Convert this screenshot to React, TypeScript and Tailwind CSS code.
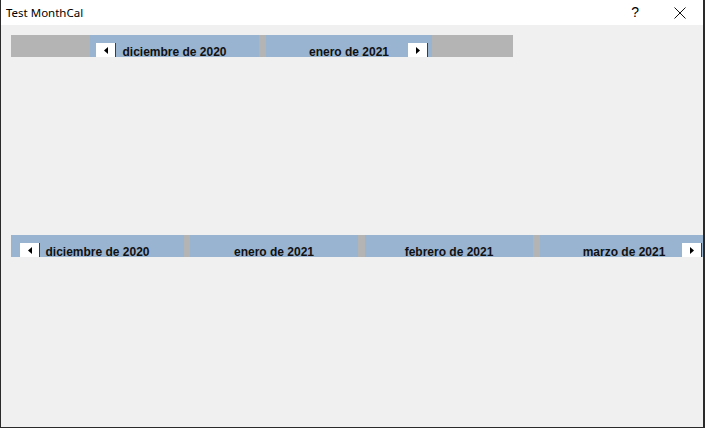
import React from 'react';

const font = { fontFamily: '"Liberation Sans", Arial, sans-serif' };

const NavButton: React.FC<{ dir: 'prev' | 'next'; className: string }> = ({ dir, className }) => (
  <div className={`absolute top-[8px] w-[20px] h-[16px] bg-white border-r border-[#3c3c3c] flex items-start justify-center pt-[4px] ${className}`}>
    <svg width="4" height="7" viewBox="0 0 4 7">
      {dir === 'prev' ? <path d="M4 0 L0 3.5 L4 7 Z" fill="#000" /> : <path d="M0 0 L4 3.5 L0 7 Z" fill="#000" />}
    </svg>
  </div>
);

const MonthHeader: React.FC<{ title: string; width: string; children?: React.ReactNode }> = ({ title, width, children }) => (
  <div className={`relative shrink-0 h-full bg-[#99b4d1] ${width}`}>
    <div className="pt-[10px] text-center text-[12px] leading-[14px] font-bold text-[#111]" style={font}>
      {title}
    </div>
    {children}
  </div>
);

const Sep: React.FC<{ w?: string }> = ({ w = 'w-[7px]' }) => <div className={`shrink-0 h-full bg-[#b4b4b4] ${w}`} />;

export default function App() {
  return (
    <div className="w-[705px] h-[428px] flex flex-col border-l border-r-2 border-b border-[#2a2a2a] bg-white overflow-hidden" style={font}>
      <div className="h-[25px] shrink-0 flex items-center bg-white">
        <span className="pl-[5px] text-[11.5px] text-black" style={{ fontFamily: '"Noto Sans", "Liberation Sans", sans-serif' }}>
          Test MonthCal
        </span>
        <span className="ml-auto text-[14px] text-black leading-none mr-[35px] mb-[1px]" style={{ fontFamily: '"Liberation Sans", sans-serif' }}>?</span>
        <svg width="12" height="12" viewBox="0 0 12 12" className="mr-[17px]">
          <path d="M0.5 0.5 L11.5 11.5 M11.5 0.5 L0.5 11.5" stroke="#111" strokeWidth="1" />
        </svg>
      </div>

      <div className="flex-1 bg-[#f0f0f0] pl-[10px] pt-[10px] overflow-hidden">
        <div className="flex h-[22px] w-[502px] overflow-hidden">
          <div className="w-[79px] shrink-0 h-full bg-[#b4b4b4]" />
          <MonthHeader title="diciembre de 2020" width="w-[169px]">
            <NavButton dir="prev" className="left-[6px]" />
          </MonthHeader>
          <Sep />
          <MonthHeader title="enero de 2021" width="w-[166px]">
            <NavButton dir="next" className="left-[142px]" />
          </MonthHeader>
          <div className="w-[81px] shrink-0 h-full bg-[#b4b4b4]" />
        </div>

        <div className="flex h-[22px] w-[720px] mt-[178px] overflow-hidden">
          <MonthHeader title="diciembre de 2020" width="w-[173px]">
            <NavButton dir="prev" className="left-[9px]" />
          </MonthHeader>
          <Sep w="w-[6px]" />
          <MonthHeader title="enero de 2021" width="w-[168px]" />
          <Sep />
          <MonthHeader title="febrero de 2021" width="w-[168px]" />
          <Sep />
          <MonthHeader title="marzo de 2021" width="w-[168px]">
            <NavButton dir="next" className="left-[142px]" />
          </MonthHeader>
        </div>
      </div>
    </div>
  );
}
